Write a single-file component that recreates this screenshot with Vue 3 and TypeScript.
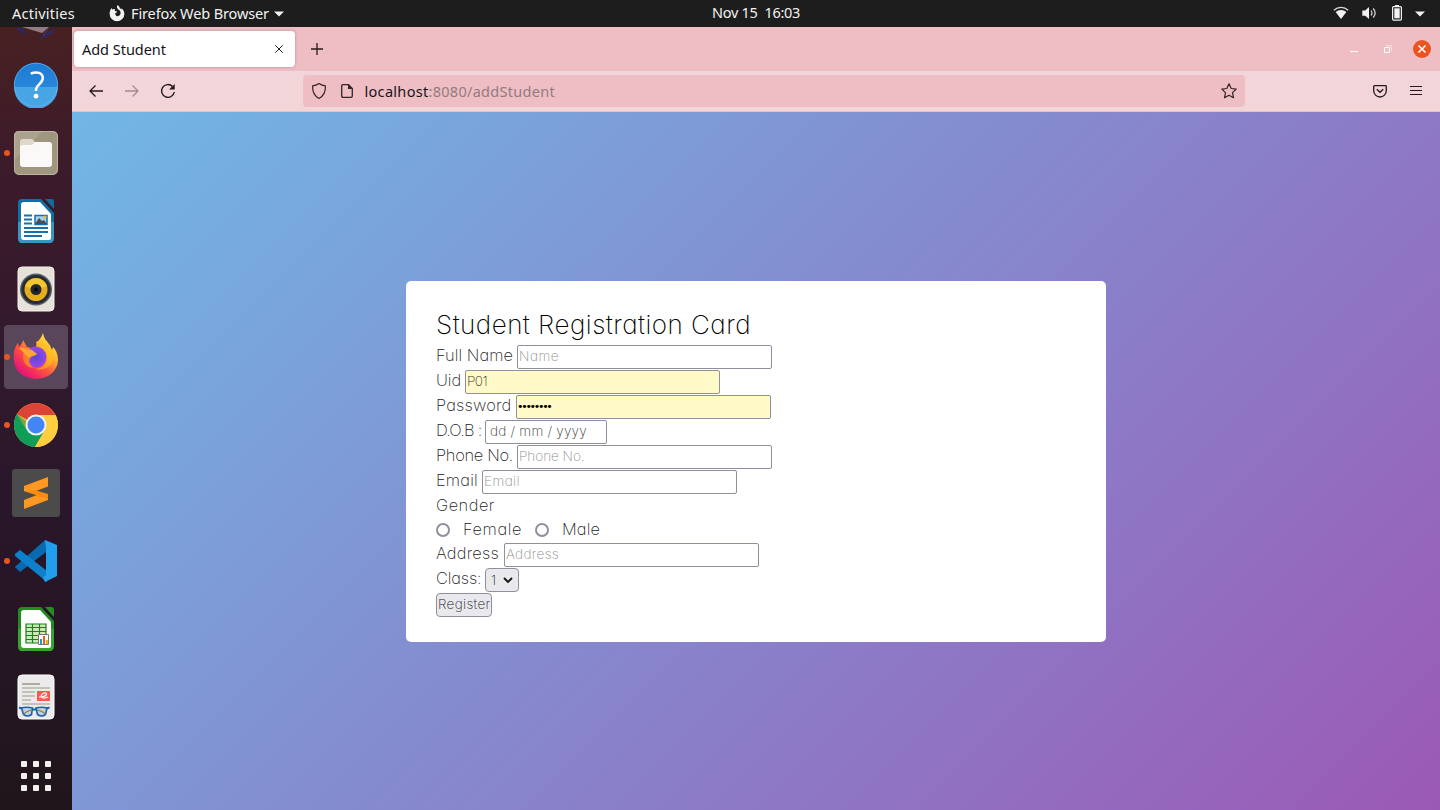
<script setup lang="ts">
import { ref } from 'vue'

interface Field {
  label: string
  labelWidth: number
  slot: number
  kind: 'text' | 'filled' | 'password' | 'date'
  text: string
  textWidth: number
}

const topFields: Field[] = [
  { label: 'Full Name', labelWidth: 77, slot: 81, kind: 'text', text: 'Name', textWidth: 40 },
  { label: 'Uid', labelWidth: 25, slot: 29, kind: 'filled', text: 'P01', textWidth: 20 },
  { label: 'Password', labelWidth: 75.5, slot: 80, kind: 'password', text: '••••••••', textWidth: 33.5 },
  { label: 'D.O.B :', labelWidth: 45.5, slot: 49, kind: 'date', text: 'dd / mm / yyyy', textWidth: 97 },
  { label: 'Phone No.', labelWidth: 77, slot: 81, kind: 'text', text: 'Phone No.', textWidth: 65.5 },
  { label: 'Email', labelWidth: 42, slot: 46, kind: 'text', text: 'Email', textWidth: 36 },
]

const address: Field = { label: 'Address', labelWidth: 63, slot: 68, kind: 'text', text: 'Address', textWidth: 53 }
const clock = 'Nov 15\u00a0 16:03'
const gender = ref('')

// Spreads a run of text over a fixed width by adjusting its tracking.
const vFit = {
  mounted(el: HTMLElement, binding: { value: number }) {
    const count = (el.textContent ?? '').length
    const natural = el.getBoundingClientRect().width
    if (count > 0) el.style.letterSpacing = `${(binding.value - natural) / count}px`
  },
}
</script>

<template>
  <div class="desktop">
    <header class="panel">
      <span v-fit="63" class="fit">Activities</span>
      <svg class="ff-sym" width="16" height="17" viewBox="0 0 16 17">
        <path fill="#f2f2f2" d="M8.3.3c1.700.7 2.400 1.900 2.500 3 .8.2 1.300.8 1.600 1.400V3.200c1.800 1.300 3 3.200 3 5.600a7.400 7.400 0 0 1-14.800 0C.6 6.500 1.500 4.400 2.800 3.100l.4 1.500c.9-.6 2-.7 2.800-.3-.6.8-.2 1.700.8 2l1.300.3c-.1.9-1 1.300-1.900 1.700-.2 1.500.9 2.900 2.400 2.900 1.700 0 3-1.400 3-3.100 0-1.600-.7-2.600-2-3.300C8.100 3.700 7.500 2 8.300.3z" />
      </svg>
      <span v-fit="138" class="fit app-name">Firefox Web Browser</span>
      <svg class="caret" width="10" height="6" viewBox="0 0 10 6"><path d="M0 .5h10L5 5.500z" fill="#f2f2f2" /></svg>
      <span v-fit="88" class="fit clock">{{ clock }}</span>
      <div class="tray">
        <svg width="16" height="14" viewBox="0 0 16 14">
          <path d="M.8 4.200C5 .4 11 .4 15.200 4.200" fill="none" stroke="#d8d8d8" stroke-width="1.300" />
          <path d="M2.600 6C5.800 3.200 10.200 3.200 13.400 6L8 13z" fill="#f2f2f2" />
        </svg>
        <svg width="15" height="14" viewBox="0 0 15 14">
          <path d="M.3 4.500h2.900L7 1v12L3.200 9.700H.3z" fill="#f2f2f2" />
          <path d="M9 4.500q2 2.500 0 5M11.200 2.500q4 4.500 0 9" fill="none" stroke="#ddd" stroke-width="1.200" />
        </svg>
        <svg width="10" height="16" viewBox="0 0 10 16">
          <path d="M3 0h4v1.500H3z" fill="#f2f2f2" /><rect x=".6" y="1.600" width="8.800" height="13.500" rx="1" fill="none" stroke="#f2f2f2" stroke-width="1.200" />
          <path d="M2.300 3.300h5.400v10H2.300z" fill="#f2f2f2" />
        </svg>
        <svg width="10" height="6" viewBox="0 0 10 6"><path d="M0 .5h10L5 5.500z" fill="#f2f2f2" /></svg>
      </div>
    </header>

    <div class="workspace">
      <aside class="dock">
        <div class="clipped">
          <svg width="44" height="14" viewBox="0 0 44 14">
            <path d="M8 0l20 6 7-6z" fill="#927d82" /><path d="M2 1q6 6 12 7L8 1z" fill="#2c285e" /><path d="M23 12q14-2 19-11l-11 6q-3 3-8 5z" fill="#2e2a68" /><path d="M29 8l5-6" stroke="#48407c" />
          </svg>
        </div>
        <div class="slot">
          <svg width="46" height="46" viewBox="0 0 46 46">
            <defs><linearGradient id="help" x2="0" y2="1"><stop stop-color="#1c7bd3" /><stop offset="1" stop-color="#3291e0" /></linearGradient></defs>
            <circle cx="23" cy="22.800" r="22" fill="url(#help)" /><path d="M1 25a22 22 0 0 0 44 0z" fill="#48a5e5" />
            <circle cx="23" cy="22.800" r="21.600" fill="none" stroke="#66b8ed" stroke-width=".7" />
            <path d="M17.800 11.700c6-2.800 12-.7 12 4.400 0 5.700-6.800 6.200-6.800 11.900v1" fill="none" stroke="#fff" stroke-width="2.500" /><circle cx="23" cy="34.200" r="2.400" fill="#fff" />
          </svg>
        </div>
        <div class="slot running">
          <svg width="46" height="46" viewBox="0 0 46 46">
            <rect x="1" y="1" width="44" height="44" rx="5" fill="#9e967f" /><path d="M1 30L30 1H6q-5 0-5 5z" fill="#aaa28d" /><rect x="1.500" y="1.500" width="43" height="43" rx="5" fill="none" stroke="#bbb4a3" />
            <path d="M7 12q0-3 3-3h8q2 0 3 2l2 2h13q3 0 3 3v12H7z" fill="#ded9cb" /><path d="M7 18q0-3 3-3h8q2 0 4-3h14q3 0 3 3v19q0 3-3 3H10q-3 0-3-3z" fill="#faf9f7" />
          </svg>
        </div>
        <div class="slot">
          <svg width="38" height="46" viewBox="0 0 38 46">
            <path d="M5 1h19l13 14v25q0 5-5 5H5q-4 0-4-5V5q0-4 4-4z" fill="#0d70a9" /><path d="M1 24h36v16q0 5-5 5H5q-4 0-4-5z" fill="#3b95c4" />
            <path d="M7 4h16l11 12v24q0 2-2 2H7q-3 0-3-3V7q0-3 3-3z" fill="#fff" /><path d="M28 1h6q3 0 3 3v7z" fill="#126b9d" />
            <path d="M7 17.500h8M7 21.500h8M7 25.500h8M7 30h24M7 34h24M7 38h18" stroke="#1771a7" stroke-width="2" />
            <path d="M18 17.500h12v9H18z" fill="#9ed2ef" stroke="#1771a7" stroke-width="1.500" /><path d="M18 26l4-6 3 3 2-1 3 4z" fill="#4c4d51" /><circle cx="28" cy="19" r="1.500" fill="#edb735" />
          </svg>
        </div>
        <div class="slot">
          <svg width="38" height="46" viewBox="0 0 38 46">
            <rect x="1" y="1" width="36" height="44" rx="4" fill="#e6e1d9" stroke="#f6f1e9" /><circle cx="19" cy="23.500" r="16" fill="#555e69" /><circle cx="19" cy="23.500" r="14.500" fill="#292a32" />
            <circle cx="19" cy="23.500" r="11.500" fill="#e4ad19" /><path d="M8 20.500a11.500 11.500 0 0 1 22 0l-11 3z" fill="#f3c730" /><circle cx="19" cy="23.500" r="5.500" fill="#24252d" /><circle cx="19" cy="23.500" r="2" fill="#090a0e" />
          </svg>
        </div>
        <div class="slot running focused">
          <svg width="46" height="48" viewBox="0 0 46 48">
            <defs>
              <linearGradient id="fox" x1=".9" y1=".1" x2=".25" y2=".9"><stop stop-color="#fff044" /><stop offset=".35" stop-color="#ffad2b" /><stop offset=".65" stop-color="#ff5142" /><stop offset="1" stop-color="#e91674" /></linearGradient>
              <radialGradient id="globe"><stop stop-color="#5b44d8" /><stop offset="1" stop-color="#9748e4" /></radialGradient>
            </defs>
            <path d="M30 0c1 6 4 8 6 11 2 2 2 5 3 6l1-3c4 4 5 9 5 13A22 19 0 0 1 1 27C0 19 2 14 5 10l1 4c2-2 4-5 4-7l4 7c2 0 4 1 6 3 3-3 4-4 3-8 3-1 5-4 7-9z" fill="url(#fox)" />
            <circle cx="23" cy="24" r="10.500" fill="url(#globe)" />
            <path d="M14 17c2 0 5 1 7 2l3 2c-2 2-5 2-7 4-2 4 1 8 4 10-9 0-13-9-10-16z" fill="#ff7b2d" />
            <path d="M6 15q3-1 5 0l8 2 5 4c-2 2-6 1-8 4l-4-4z" fill="#ffa632" />
            <path d="M25 14c5 1 10 4 9 12-1 6-6 10-12 10 11 3 21-6 19-15-1-5-6-8-10-12q-4 2-6 5z" fill="#ffc21b" opacity=".6" />
          </svg>
        </div>
        <div class="slot running">
          <svg width="46" height="46" viewBox="0 0 46 46">
            <circle cx="23" cy="23" r="22" fill="#f9c93d" /><path d="M23 23L3.900 12A22 22 0 0 1 42.500 13H23z" fill="#db4437" /><path d="M4 12a22 22 0 0 0 18 33l10-17-9-5-10 4z" fill="#109d58" /><path d="M23 13h19.500A22 22 0 0 1 22 45l10-17z" fill="#ffcd40" />
            <path d="M4 12l10 17-1-10z" fill="#0a8049" opacity=".5" /><circle cx="23" cy="23" r="10.500" fill="#f1f1f1" /><circle cx="23" cy="23" r="8.500" fill="#4285f4" />
          </svg>
        </div>
        <div class="slot">
          <svg width="48" height="48" viewBox="0 0 48 48">
            <rect width="48" height="48" rx="3" fill="#4b4b4b" /><path d="M12 17l24-9v9.500l-12 4.500 12 4v5L12 40v-9l13-5-13-4z" fill="#ff9820" /><path d="M12 22l24 8v-5l-12-3.500z" fill="#f98b12" />
          </svg>
        </div>
        <div class="slot running">
          <svg width="44" height="44" viewBox="0 0 44 44">
            <path d="M1 28L31 1v11L6 32z" fill="#0864a1" /><path d="M1 28l5 5L32 13V1z" fill="#096ab0" /><path d="M1 15l5-4 27 21v11L1 17z" fill="#0e80cb" /><path d="M31 1l12 5v31l-12 6-2-4 3-3V9z" fill="#229fec" />
          </svg>
        </div>
        <div class="slot">
          <svg width="38" height="46" viewBox="0 0 38 46">
            <path d="M5 1h19l13 14v25q0 5-5 5H5q-4 0-4-5V5q0-4 4-4z" fill="#248b20" /><path d="M1 23h36v17q0 5-5 5H5q-4 0-4-5z" fill="#37a42c" /><path d="M7 4h16l11 12v24q0 2-2 2H7q-3 0-3-3V7q0-3 3-3z" fill="#fff" /><path d="M28 1h6q3 0 3 3v7z" fill="#278d21" />
            <path d="M9 18h20v19H9z" fill="#caeabe" stroke="#168217" stroke-width="1.200" /><path d="M9 21.500h20M9 25.500h20M9 29.500h20M9 33.500h20M15.500 18v19M22.500 18v19" stroke="#168217" stroke-width="1.200" /><path d="M21.500 28.500h10v10h-10z" fill="#fff" stroke="#777" /><path d="M23 33h2v5h-2z" fill="#2496ca" /><path d="M26 30h2v8h-2z" fill="#d86518" /><path d="M29 34h2v4h-2z" fill="#e8b916" />
          </svg>
        </div>
        <div class="slot">
          <svg width="38" height="46" viewBox="0 0 38 46">
            <rect x="1" y="1" width="36" height="44" rx="4" fill="#ebebeb" stroke="#fff" /><path d="M5 14h28M5 18h13M5 22h13M5 26h9M5 30h28" stroke="#c6c1b7" stroke-width="1.800" /><path d="M5 10h18" stroke="#aaa398" stroke-width="1.800" />
            <path d="M20 17h13v10H20z" fill="#fa5a4d" /><path d="M22 23c9 0 9-5 5-4-5 2-3 7 4 4" fill="none" stroke="#fff" stroke-width="1.200" />
            <path d="M4.500 34q5-1.500 11 0l-1 6.500q-4 3-8 0zM19 34q6-1.500 11 0l-1.500 6.500q-4 3-8 0z" fill="#c9cfd5" stroke="#1a62b5" stroke-width="1.600" /><path d="M2 33.500l3 1M15.500 35.500h3.500M32.500 33.500l-3 1" fill="none" stroke="#1a62b5" stroke-width="2" /><path d="M6 41q3-4 9-5M29 41q-3-4-9-5" fill="none" stroke="#777c82" stroke-width="1.200" />
          </svg>
        </div>
        <div class="apps"><i v-for="n in 9" :key="n" /></div>
      </aside>

      <section class="browser">
        <div class="tabs">
          <div class="tab">
            <span v-fit="84" class="fit">Add Student</span>
            <svg width="8" height="8" viewBox="0 0 8 8"><path d="M.3.3l7.400 7.400M7.700.3L.3 7.700" stroke="#28191b" stroke-width="1" /></svg>
          </div>
          <svg class="plus" width="12" height="12" viewBox="0 0 12 12"><path d="M6 0v12M0 6h12" stroke="#28191b" stroke-width="1.300" /></svg>
          <div class="window-buttons">
            <svg width="8" height="12" viewBox="0 0 8 12"><path d="M0 8.500h8" stroke="#fff" /></svg>
            <svg width="8" height="8" viewBox="0 0 8 8"><path d="M.5 2.500h5v5h-5z" fill="none" stroke="#fff" /><path d="M2 .5h5.500V6" fill="none" stroke="#f6dce0" /></svg>
            <svg width="18" height="18" viewBox="0 0 18 18"><circle cx="9" cy="9" r="9" fill="#e95420" /><path d="M5.500 5.500l7 7M12.500 5.500l-7 7" stroke="#fff" stroke-width="1.600" /></svg>
          </div>
        </div>
        <div class="toolbar">
          <svg class="back" width="14" height="12" viewBox="0 0 14 12"><path d="M14 6H1M6.500.5L1 6l5.500 5.500" fill="none" stroke="#23181a" stroke-width="1.300" stroke-linejoin="round" /></svg>
          <svg class="forward" width="14" height="12" viewBox="0 0 14 12"><path d="M0 6h13M7.500.5L13 6l-5.500 5.500" fill="none" stroke="#a38b8f" stroke-width="1.300" stroke-linejoin="round" /></svg>
          <svg class="reload" width="16" height="16" viewBox="0 0 16 16"><path d="M12.500 3.400A6.400 6.400 0 1 0 14.300 9" fill="none" stroke="#23181a" stroke-width="1.400" /><path d="M14.700 1v5.600H9.100z" fill="#23181a" /></svg>
          <div class="urlbar">
            <svg class="shield" width="16" height="18" viewBox="0 0 16 18"><path d="M8 1.500q3 2 6.400 2.300C14.700 9.500 13 13.800 8 16.500 3 13.800 1.300 9.500 1.600 3.800 5 3.500 8 1.500 8 1.500z" fill="none" stroke="#332326" stroke-width="1.200" stroke-linejoin="round" /></svg>
            <svg class="page-icon" width="12" height="14" viewBox="0 0 12 14"><path d="M2 .7h5.500L11.300 4.500V12q0 1.300-1.300 1.300H2Q.7 13.300.7 12V2Q.7.700 2 .7z" fill="none" stroke="#332326" stroke-width="1.300" /><path d="M7 .5L11.500 5H7z" fill="#332326" /></svg>
            <span v-fit="64" class="fit host">localhost</span><span v-fit="126.500" class="fit path">:8080/addStudent</span>
            <svg class="star" width="16" height="16" viewBox="0 0 16 16"><path d="M8 .8l2.200 4.700 5 .6-3.700 3.500 1 5.100L8 12.200l-4.500 2.500 1-5.100L.8 6.100l5-.6z" fill="none" stroke="#332326" stroke-width="1.200" stroke-linejoin="round" /></svg>
          </div>
          <svg class="pocket" width="14" height="13" viewBox="0 0 14 13"><path d="M1.500.7h11q.8 0 .8.800v4.200a6.300 6.300 0 0 1-12.600 0V1.500q0-.8.800-.8z" fill="none" stroke="#23181a" stroke-width="1.300" /><path d="M3.800 4.200L7 7.200l3.200-3" fill="none" stroke="#23181a" stroke-width="1.400" /></svg>
          <svg class="menu" width="12" height="10" viewBox="0 0 12 10"><path d="M0 .5h12M0 4.500h12M0 8.500h12" stroke="#23181a" stroke-width="1.100" /></svg>
        </div>

        <main class="page">
          <form class="card" @submit.prevent>
            <h1><span v-fit="315" class="fit">Student Registration Card</span></h1>
            <div v-for="f in topFields" :key="f.label" class="row">
              <div class="label" :style="{ width: f.slot + 'px' }"><span v-fit="f.labelWidth" class="fit">{{ f.label }}</span></div>
              <div class="input" :class="f.kind"><span v-fit="f.textWidth" class="fit">{{ f.text }}</span></div>
            </div>
            <div class="row short"><div class="label"><span v-fit="59" class="fit">Gender</span></div></div>
            <div class="row short radios">
              <label><input v-model="gender" type="radio" value="f"><span v-fit="59" class="fit">Female</span></label>
              <label><input v-model="gender" type="radio" value="m"><span v-fit="38" class="fit">Male</span></label>
            </div>
            <div class="row">
              <div class="label" :style="{ width: address.slot + 'px' }"><span v-fit="address.labelWidth" class="fit">{{ address.label }}</span></div>
              <div class="input text"><span v-fit="address.textWidth" class="fit">{{ address.text }}</span></div>
            </div>
            <div class="row">
              <div class="label class-label"><span v-fit="45.500" class="fit">Class:</span></div>
              <div class="select"><span>1</span><svg width="10" height="7" viewBox="0 0 10 7"><path d="M1 1l4 4 4-4" fill="none" stroke="#111" stroke-width="1.900" /></svg></div>
            </div>
            <button type="submit"><span v-fit="52.500" class="fit">Register</span></button>
          </form>
        </main>
      </section>
    </div>
  </div>
</template>

<style>
body { margin: 0; overflow: hidden; }
</style>

<style scoped>
* { box-sizing: border-box; }
svg { display: block; flex: none; }
.desktop { width: 1440px; height: 810px; display: flex; flex-direction: column; overflow: hidden; font: 14.500px "Noto Sans", "Open Sans", sans-serif; }
.fit { display: inline-block; white-space: pre; flex: none; }
.panel { height: 27px; flex: none; background: #1d1d1d; color: #f2f2f2; display: flex; align-items: center; padding: 0 15px 0 12px; }
.panel .fit { padding-bottom: 2px; }
.ff-sym { margin-left: 34px; margin-top: -1px; }
.app-name { margin-left: 6px; }
.caret { margin-left: 5px; }
.panel .clock { margin-left: 428px; padding-bottom: 3px; }
.tray { margin-left: auto; display: flex; align-items: center; }
.tray svg { margin-top: -1px; }
.tray svg:nth-child(2) { margin-left: 13px; }
.tray svg:nth-child(3) { margin-left: 15px; }
.tray svg:nth-child(4) { margin-left: 13px; margin-top: 0; }
.workspace { flex: 1; min-height: 0; display: flex; }
.dock { width: 72px; flex: none; overflow: hidden; background: linear-gradient(#472022, #3c1b2a 18%, #32192d 42%, #29162a 62%, #20151b); }
.clipped { height: 24px; display: flex; justify-content: center; }
.slot { height: 68px; display: flex; align-items: center; justify-content: center; position: relative; }
.running::before { content: ""; position: absolute; left: 4px; top: 31px; width: 6px; height: 6px; border-radius: 50%; background: #e95420; z-index: 1; }
.focused { height: 64px; margin: 2px 4px; border-radius: 4px; background: #5a465a; }
.focused::before { left: 0; top: 29px; }
.apps { padding: 30px 21px 0; display: grid; grid-template-columns: repeat(3, 6px); gap: 6px; }
.apps i { width: 6px; height: 6px; border-radius: 1px; background: #f2f0ef; }
.browser { flex: 1; display: flex; flex-direction: column; }
.tabs { height: 44px; background: #eebec4; display: flex; align-items: center; padding: 0 9px 0 2px; }
.tab { width: 221px; height: 36px; border-radius: 4px; background: #fff; box-shadow: 0 0 3px #0004; display: flex; align-items: center; justify-content: space-between; padding: 0 12px 0 8px; color: #15141a; }
.plus { margin-left: 15.500px; }
.window-buttons { margin-left: auto; display: flex; align-items: center; }
.window-buttons svg:nth-child(2) { margin-left: 26px; }
.window-buttons svg:nth-child(3) { margin-left: 21px; }
.toolbar { height: 41px; background: #f2d5d9; border-bottom: 1px solid #eebec4; display: flex; align-items: center; padding: 0 18px 0 17px; }
.forward { margin-left: 22px; }
.reload { margin-left: 21px; }
.urlbar { width: 942px; height: 32px; margin-left: 127px; border-radius: 4px; background: #eebec4; display: flex; align-items: center; padding: 0 8px; color: #15141a; }
.page-icon { margin-left: 14px; }
.host { margin-left: 11.500px; }
.path { color: #937b80; }
.star { margin-left: auto; }
.pocket { margin-left: 128px; }
.menu { margin-left: 23px; }
.page { flex: 1; display: flex; align-items: flex-start; justify-content: center; padding-top: 169px; background: linear-gradient(135deg, #71b7e6, #9b59b6); }
.card { width: 700px; height: 361px; border-radius: 5px; background: #fff; padding: 25px 30px; font: 250 16.400px/20px Inter, "Open Sans", sans-serif; font-feature-settings: "cv11", "ss03"; color: #222; }
h1 { margin: 0; height: 39px; font-size: 26px; line-height: 37px; font-weight: 200; color: #000; }
.row { height: 25px; display: flex; align-items: flex-start; }
.short { height: 24px; }
.label { flex: none; }
.class-label { width: 49px; }
.input { width: 255px; height: 24px; border: 1px solid #8f8f9d; border-radius: 2px; padding: 0 1px; font-size: 13.600px; line-height: 21px; color: #333; }
.text { color: #8f8f8f; font-weight: 200; }
.filled, .password { background: #fffac8; }
.password { font: 11px/22px "DejaVu Sans", sans-serif; color: #000; padding-left: 0; }
.date { width: 122px; padding-left: 4px; }
.radios label { display: flex; }
.radios input { appearance: none; width: 14px; height: 14px; margin: 4px 13px 0 0; border: 2px solid #8f8f9d; border-radius: 50%; background: #fff; }
.radios label + label { margin-left: 13px; }
.select { width: 34px; height: 24px; border: 1px solid #8f8f9d; border-radius: 4px; background: #e9e9ed; display: flex; align-items: center; justify-content: space-between; padding: 0 5px; font-size: 13.333px; }
button { display: block; width: 56px; height: 24px; border: 1px solid #8f8f9d; border-radius: 4px; background: #e9e9ed; padding: 0 0 1px 1px; font: 250 13.500px/21px Inter, sans-serif; font-feature-settings: "cv11"; color: #222; text-align: left; }
</style>
